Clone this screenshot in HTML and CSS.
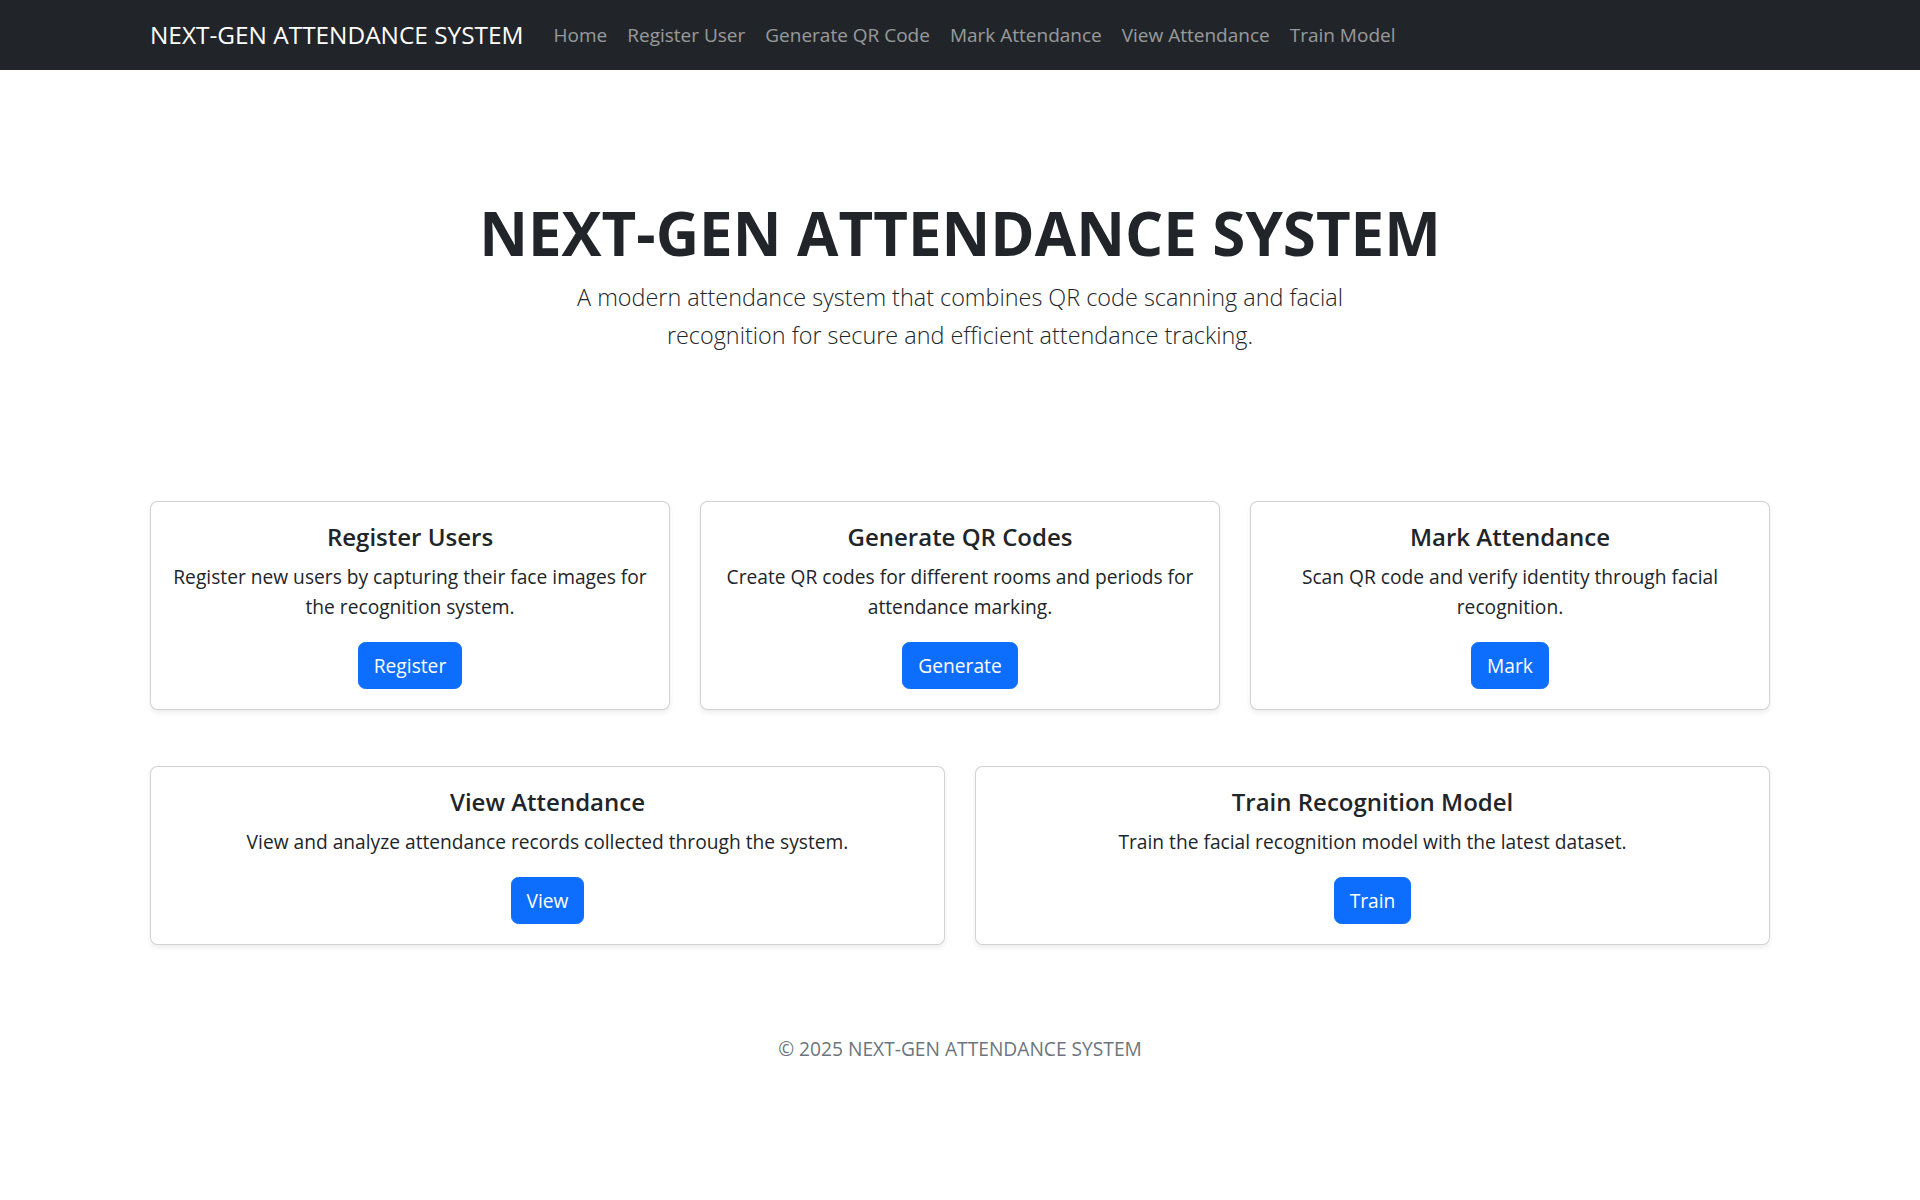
FILE: index.html
```html
<!DOCTYPE html>
<html lang="en">
<head>
<meta charset="utf-8">
<title>NEXT-GEN ATTENDANCE SYSTEM</title>
<link rel="stylesheet" href="styles.css">
</head>
<body>
<nav class="navbar">
  <div class="container nav-inner">
    <a class="brand" href="#">NEXT-GEN ATTENDANCE SYSTEM</a>
    <ul class="nav-links">
      <li><a href="#">Home</a></li>
      <li><a href="#">Register User</a></li>
      <li><a href="#">Generate QR Code</a></li>
      <li><a href="#">Mark Attendance</a></li>
      <li><a href="#">View Attendance</a></li>
      <li><a href="#">Train Model</a></li>
    </ul>
  </div>
</nav>
<main class="container main">
  <section class="hero">
    <h1 class="hero-title">NEXT-GEN ATTENDANCE SYSTEM</h1>
    <p class="lead">A modern attendance system that combines QR code scanning and facial recognition for secure and efficient attendance tracking.</p>
  </section>
  <div class="row row-3">
    <div class="card">
      <h5 class="card-title">Register Users</h5>
      <p class="card-text">Register new users by capturing their face images for the recognition system.</p>
      <a class="btn" href="#">Register</a>
    </div>
    <div class="card">
      <h5 class="card-title">Generate QR Codes</h5>
      <p class="card-text">Create QR codes for different rooms and periods for attendance marking.</p>
      <a class="btn" href="#">Generate</a>
    </div>
    <div class="card">
      <h5 class="card-title">Mark Attendance</h5>
      <p class="card-text">Scan QR code and verify identity through facial recognition.</p>
      <a class="btn" href="#">Mark</a>
    </div>
  </div>
  <div class="row row-2">
    <div class="card">
      <h5 class="card-title">View Attendance</h5>
      <p class="card-text">View and analyze attendance records collected through the system.</p>
      <a class="btn" href="#">View</a>
    </div>
    <div class="card">
      <h5 class="card-title">Train Recognition Model</h5>
      <p class="card-text">Train the facial recognition model with the latest dataset.</p>
      <a class="btn" href="#">Train</a>
    </div>
  </div>
</main>
<footer class="footer">
  <p>&copy; 2025 NEXT-GEN ATTENDANCE SYSTEM</p>
</footer>
</body>
</html>
```
FILE: styles.css
```css
* { box-sizing: border-box; }
html, body { margin: 0; padding: 0; }
body {
  font-family: "Open Sans", "Noto Sans", "Liberation Sans", sans-serif;
  font-size: 19.2px;
  line-height: 30px;
  color: #212529;
  background: #fff;
}
a { text-decoration: none; }
.container {
  width: 1650px;
  margin: 0 auto;
  padding: 0 15px;
}
.navbar {
  background: #212529;
  height: 70px;
}
.nav-inner {
  display: flex;
  align-items: center;
  height: 70px;
}
.brand {
  color: #fff;
  font-size: 24.4px;
  line-height: 37.5px;
  margin-right: 20px;
  white-space: nowrap;
}
.nav-links {
  display: flex;
  list-style: none;
  margin: 0;
  padding: 0;
}
.nav-links a {
  display: block;
  color: rgba(255,255,255,0.55);
  font-size: 19px;
  line-height: 30px;
  padding: 10px 10px;
  white-space: nowrap;
}
.hero {
  text-align: center;
  padding: 127px 0 147px;
}
.hero-title {
  font-size: 60px;
  font-weight: 700;
  line-height: 72px;
  margin: 0 0 10px;
}
.lead {
  font-size: 23.4px;
  font-weight: 300;
  line-height: 37.5px;
  max-width: 800px;
  margin: 0 auto;
}
.row {
  display: grid;
  gap: 30px;
}
.row-3 { grid-template-columns: repeat(3, 1fr); margin-bottom: 56px; }
.row-2 { grid-template-columns: repeat(2, 1fr); }
.card {
  display: flex;
  flex-direction: column;
  align-items: center;
  text-align: center;
  border: 1px solid rgba(0,0,0,0.175);
  border-radius: 7.5px;
  box-shadow: 0 2.5px 5px rgba(0,0,0,0.075);
  padding: 20px;
  background: #fff;
}
.card-title {
  font-size: 24px;
  font-weight: 600;
  line-height: 30px;
  margin: 0 0 10px;
}
.card-text {
  margin: 0 0 20px;
}
.btn {
  display: inline-block;
  background: #0d6efd;
  border: 1px solid #0d6efd;
  color: #fff;
  border-radius: 7.5px;
  padding: 7.5px 15px;
  font-size: 19.2px;
  line-height: 30px;
}
.footer {
  text-align: center;
  color: #6c757d;
  padding: 89px 0 40px;
}
.footer p { margin: 0; }
```
